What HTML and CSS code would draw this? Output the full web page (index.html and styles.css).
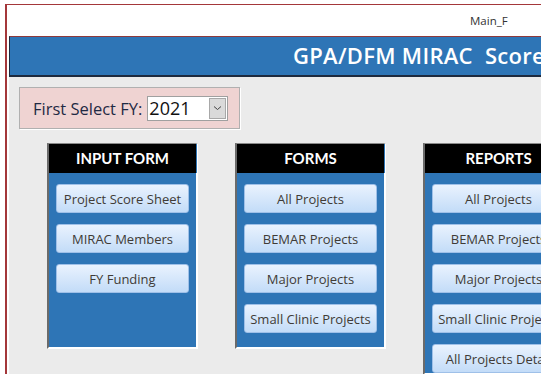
FILE: index.html
```html
<!DOCTYPE html>
<html lang="en">
<head>
  <meta charset="UTF-8" />
  <title>Main_F</title>
  <link rel="stylesheet" href="styles.css">
</head>
<body>
<div class="window">
  <div class="tabbar">Main_F</div>
  <div class="form">
    <div class="header">
      <h1>GPA/DFM MIRAC&nbsp; Score Dashboard</h1>
    </div>

    <div class="fybox">
      <label for="fy">First Select FY:</label>
      <div class="combo">
        <span class="combo-value">2021</span>
        <span class="combo-btn">
          <svg width="9" height="6" viewBox="0 0 9 6"><path d="M1 1.5 L4.5 4.5 L8 1.5" fill="none" stroke="#444" stroke-width="1"/></svg>
        </span>
      </div>
    </div>

    <div class="panels">
      <div class="panel">
        <div class="panel-title">INPUT FORM</div>
        <div class="panel-body">
          <button>Project Score Sheet</button>
          <button>MIRAC Members</button>
          <button>FY Funding</button>
        </div>
      </div>
      <div class="panel">
        <div class="panel-title">FORMS</div>
        <div class="panel-body">
          <button>All Projects</button>
          <button>BEMAR Projects</button>
          <button>Major Projects</button>
          <button>Small Clinic Projects</button>
        </div>
      </div>
      <div class="panel">
        <div class="panel-title">REPORTS</div>
        <div class="panel-body">
          <button>All Projects</button>
          <button>BEMAR Projects</button>
          <button>Major Projects</button>
          <button>Small Clinic Projects</button>
          <button>All Projects Detail</button>
        </div>
      </div>
    </div>
  </div>
</div>
</body>
</html>
```

FILE: styles.css
```css
body {
  margin: 0;
  overflow: hidden;
  background: #ffffff;
  font-family: "Open Sans", sans-serif;
}

.window {
  margin: 4px 0 0 5px;
  width: 800px;
  height: 400px;
  border-left: 2px solid #a4373a;
  border-top: 1px solid #a4373a;
  background: #ffffff;
}

.tabbar {
  height: 31px;
  padding-left: 463px;
  font-size: 11.5px;
  line-height: 31px;
  color: #333333;
}

.form {
  margin-left: 2px;
  height: 400px;
  background: #ebebeb;
}

.header {
  height: 38px;
  padding-left: 283px;
  border-top: 1px solid #8e3a3c;
  border-left: 1px solid #1e2a3e;
  border-bottom: 2px solid #1e2a3e;
  background: #2e75b6;
}

.header h1 {
  margin: 0;
  font-size: 22px;
  font-weight: 600;
  letter-spacing: 0.3px;
  line-height: 37px;
  color: #ffffff;
  white-space: nowrap;
}

.fybox {
  display: flex;
  align-items: center;
  width: 206px;
  height: 40px;
  margin: 10px 0 0 10px;
  padding-left: 13px;
  border: 1px solid #b0b0b0;
  box-shadow: 1px 1px 0 #ffffff;
  background: #efd3d2;
}

.fybox label {
  font-size: 16.5px;
  color: #1f2a44;
  margin-right: 5px;
}

.combo {
  display: flex;
  width: 79px;
  height: 23px;
  border: 1px solid #a0a0a0;
  background: #ffffff;
}

.combo-value {
  flex: 1;
  padding-left: 1px;
  font-size: 18px;
  line-height: 23px;
  color: #111111;
}

.combo-btn {
  display: flex;
  align-items: center;
  justify-content: center;
  width: 15px;
  margin: 1px;
  border: 1px solid #a8a8a8;
  background: #dadada;
}

.panels {
  display: flex;
  align-items: flex-start;
  gap: 37px;
  margin: 14px 0 0 38px;
}

.panel {
  width: 147px;
  border-top: 1px solid #8a8a8a;
  border-left: 2px solid #6a6a6a;
  border-right: 2px solid #ffffff;
  border-bottom: 2px solid #ffffff;
  background: #2e75b6;
}

.panel-title {
  height: 29px;
  margin-right: -1px;
  border-right: 1px solid #2e75b6;
  background: #000000;
  color: #ffffff;
  font-family: Lato, sans-serif;
  font-weight: bold;
  font-size: 15px;
  line-height: 29px;
  text-align: center;
}

.panel-body {
  display: flex;
  flex-direction: column;
  gap: 11px;
  min-height: 163px;
  padding: 11px 7px 0;
}

.panel-body button {
  width: 133px;
  height: 29px;
  padding: 0;
  border: 1px solid #9fc0e8;
  border-radius: 3px;
  background: linear-gradient(#e9f2fe, #c3dcf8);
  color: #403b36;
  font-family: "Open Sans", sans-serif;
  font-size: 13px;
  white-space: nowrap;
  overflow: hidden;
  cursor: pointer;
}
```
